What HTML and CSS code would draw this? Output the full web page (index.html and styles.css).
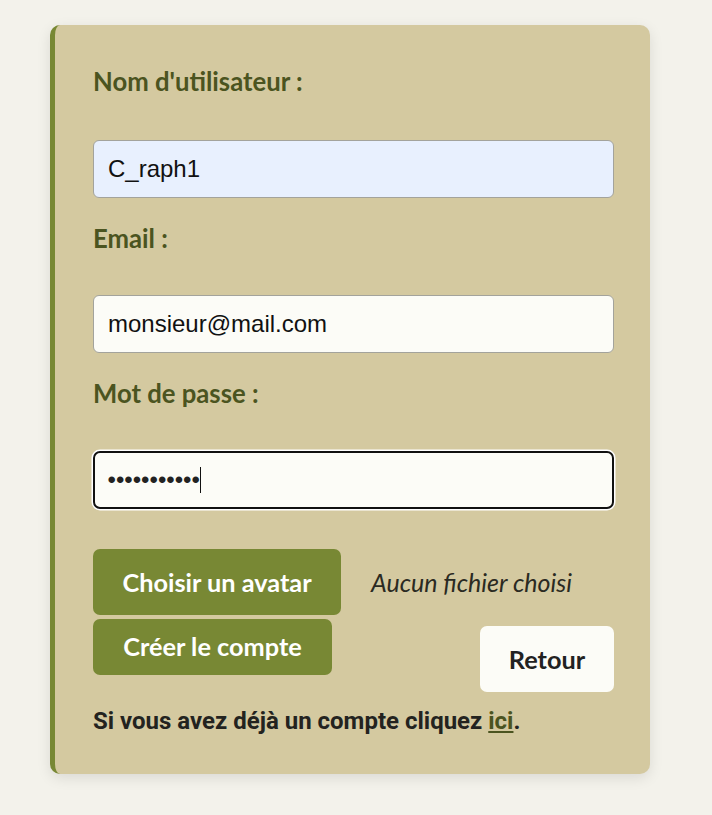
FILE: index.html
```html
<!DOCTYPE html>
<html lang="fr">
<head>
<meta charset="utf-8">
<title>Inscription</title>
<link rel="stylesheet" href="styles.css">
</head>
<body>
<form class="card">
  <label class="label" for="user">Nom d'utilisateur :</label>
  <div class="input autofill" id="user">C_raph1</div>

  <label class="label" for="mail">Email :</label>
  <div class="input" id="mail">monsieur@mail.com</div>

  <label class="label" for="pass">Mot de passe :</label>
  <div class="input focused" id="pass"><span class="dots">•••••••••••</span><span class="caret"></span></div>

  <div class="file-row">
    <span class="btn btn-olive btn-big">Choisir un avatar</span>
    <span class="file-name">Aucun fichier choisi</span>
  </div>

  <div class="actions">
    <span class="btn btn-olive btn-small">Créer le compte</span>
    <span class="btn btn-light">Retour</span>
  </div>

  <p class="login">Si vous avez déjà un compte cliquez <a href="#">ici</a>.</p>
</form>
</body>
</html>
```

FILE: styles.css
```css
html, body {
  margin: 0;
  padding: 0;
  background: #f3f2eb;
}

body {
  padding-top: 25px;
  height: 815px;
  box-sizing: border-box;
}

.card {
  width: 600px;
  margin-left: 50px;
  box-sizing: border-box;
  background: #d4c9a0;
  border-left: 5px solid #788834;
  border-radius: 10px;
  box-shadow: 0 4px 14px rgba(0, 0, 0, 0.10);
  padding: 44px 36px 41px 38px;
  display: flex;
  flex-direction: column;
}

.label {
  font-family: Lato, "Open Sans", sans-serif;
  font-weight: 700;
  font-size: 25.7px;
  line-height: 24px;
  color: #4b5420;
  margin-bottom: 45px;
}

.label:first-child {
  margin-bottom: 47px;
}

.input {
  height: 58px;
  box-sizing: border-box;
  border: 1px solid #a3a39c;
  border-radius: 6px;
  background: #fcfcf7;
  font-family: "Liberation Sans", Arial, sans-serif;
  font-size: 24px;
  color: #111;
  padding: 0 14px;
  display: flex;
  align-items: center;
  margin-bottom: 28px;
}

.input.autofill {
  background: #e8f0fe;
}

.input.focused {
  height: 58px;
  margin-top: 1px;
  border: 2.5px solid #111;
  border-radius: 7px;
  padding: 0 12.5px;
  box-shadow: 0 0 0 1.5px #fff;
  margin-bottom: 40px;
}

.dots {
  color: #222;
}

.caret {
  display: inline-block;
  width: 1px;
  height: 26px;
  background: #111;
}

.btn {
  display: inline-flex;
  align-items: center;
  justify-content: center;
  box-sizing: border-box;
  font-family: Lato, "Open Sans", sans-serif;
  font-weight: 700;
  font-size: 25.3px;
  border-radius: 7px;
}

.btn-olive {
  background: #788834;
  color: #fff;
}

.btn-big {
  width: 248px;
  height: 66px;
}

.btn-small {
  width: 239px;
  height: 56px;
  padding-bottom: 2px;
}

.btn-light {
  background: #fcfcf7;
  color: #222;
  width: 134px;
  height: 66px;
  margin-top: 7px;
}

.file-row {
  display: flex;
  align-items: center;
  gap: 30px;
}

.file-name {
  font-family: Lato, "Open Sans", sans-serif;
  font-style: italic;
  font-size: 25px;
  color: #2a2a22;
}

.actions {
  display: flex;
  justify-content: space-between;
  align-items: flex-start;
  margin-top: 4px;
}

.login {
  margin: 17px 0 0;
  font-family: Roboto, "Liberation Sans", sans-serif;
  font-weight: 700;
  font-size: 24px;
  line-height: 24px;
  color: #23231f;
}

.login a {
  color: #4b5420;
  text-decoration: underline;
}
```
